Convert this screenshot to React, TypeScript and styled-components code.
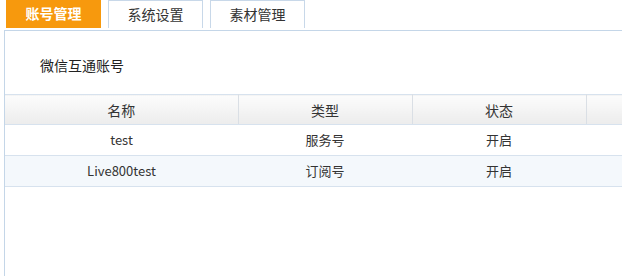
import React from 'react'
import styled, { createGlobalStyle } from 'styled-components'

const Global = createGlobalStyle`
  html, body {
    margin: 0;
    padding: 0;
    background: #fff;
    overflow: hidden;
  }
  body {
    font-family: "Noto Sans CJK SC", "Noto Sans", sans-serif;
    font-size: 13px;
    color: #333;
  }
`

const Page = styled.div`
  width: 622px;
  height: 276px;
  display: flex;
  flex-direction: column;
`

const TabBar = styled.div`
  display: flex;
  gap: 7px;
  padding-left: 6px;
  height: 28px;
`

const Tab = styled.div<{ active?: boolean }>`
  box-sizing: border-box;
  width: 95px;
  height: 28px;
  padding-bottom: 2px;
  display: flex;
  align-items: center;
  justify-content: center;
  font-size: 14px;
  cursor: pointer;
  background: ${({ active }) => (active ? '#f7990d' : '#fff')};
  color: ${({ active }) => (active ? '#fff' : '#333')};
  font-weight: ${({ active }) => (active ? 700 : 400)};
  border: ${({ active }) => (active ? 'none' : '1px solid #c8d8e9')};
  border-bottom: none;
`

const Panel = styled.div`
  flex: 1;
  margin-top: 2px;
  margin-left: 4px;
  border-top: 1px solid #c4d6e8;
  border-left: 1px solid #c4d6e8;
`

const Title = styled.div`
  padding: 23px 0 0 35px;
  height: 22px;
  line-height: 22px;
  font-size: 14px;
  color: #222;
  margin-bottom: 18px;
`

const Table = styled.table`
  width: 100%;
  border-collapse: collapse;
  table-layout: fixed;
`

const Th = styled.th`
  height: 29px;
  padding: 0;
  font-weight: 400;
  font-size: 14px;
  color: #333;
  background: linear-gradient(#fcfcfc, #ececec);
  border-top: 1px solid #d7e2ee;
  border-bottom: 1px solid #d7e2ee;
  border-right: 1px solid #dadfe5;
  &:last-child {
    border-right: none;
  }
`

const Row = styled.tr<{ striped?: boolean }>`
  background: ${({ striped }) => (striped ? '#f4f8fc' : '#fff')};
`

const Td = styled.td`
  box-sizing: border-box;
  height: 31px;
  padding: 0 0 2px;
  text-align: center;
  font-size: 13px;
  color: #333;
  border-bottom: 1px solid #d7e2ee;
`

const accounts = [
  { name: 'test', type: '服务号', status: '开启' },
  { name: 'Live800test', type: '订阅号', status: '开启' },
]

export default function App() {
  return (
    <Page>
      <Global />
      <TabBar>
        <Tab active>账号管理</Tab>
        <Tab>系统设置</Tab>
        <Tab>素材管理</Tab>
      </TabBar>
      <Panel>
        <Title>微信互通账号</Title>
        <Table>
          <colgroup>
            <col style={{ width: 233 }} />
            <col style={{ width: 174 }} />
            <col style={{ width: 174 }} />
            <col />
          </colgroup>
          <thead>
            <tr>
              <Th>名称</Th>
              <Th>类型</Th>
              <Th>状态</Th>
              <Th />
            </tr>
          </thead>
          <tbody>
            {accounts.map((a, i) => (
              <Row key={a.name} striped={i % 2 === 1}>
                <Td>{a.name}</Td>
                <Td>{a.type}</Td>
                <Td>{a.status}</Td>
                <Td />
              </Row>
            ))}
          </tbody>
        </Table>
      </Panel>
    </Page>
  )
}
